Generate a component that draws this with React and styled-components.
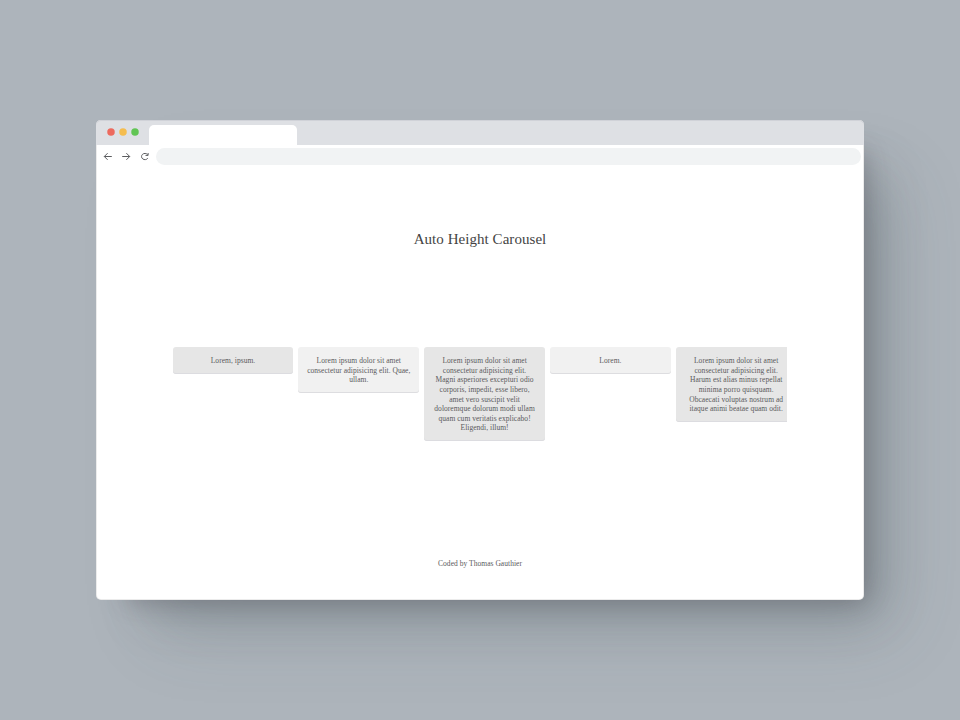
import React from "react";
import styled, { createGlobalStyle } from "styled-components";

const GlobalStyle = createGlobalStyle`
  * { box-sizing: border-box; }
  body { margin: 0; background: #adb4bb; }
`;

const Desktop = styled.main`
  height: 720px;
  overflow: hidden;
  display: grid;
  place-items: center;
  background: #adb4bb;
`;

const BrowserWindow = styled.section`
  width: 768px;
  height: 480px;
  display: flex;
  flex-direction: column;
  border-radius: 5px;
  background: #fff;
  box-shadow:
    inset 0 0 0 1px rgba(0, 0, 0, 0.08),
    16px 16px 22px -14px rgba(65, 58, 70, 0.28),
    32px 32px 44px -18px rgba(65, 75, 80, 0.25),
    46px 46px 70px -16px rgba(80, 92, 98, 0.18);
`;

const TabBar = styled.header`
  height: 25px;
  flex: none;
  display: flex;
  align-items: flex-end;
  border-radius: 5px 5px 0 0;
  background: #dee0e4;
  box-shadow: inset 0 1px 0 #d0d2d8;
`;

const Lights = styled.div`
  width: 53px;
  height: 25px;
  padding: 0 0 1px 10.5px;
  display: flex;
  align-items: center;
  gap: 4px;
`;

const Light = styled.svg`
  width: 8px;
  height: 8px;
  fill: ${({ $color }) => $color};
`;

const Tab = styled.div`
  width: 148px;
  height: 20px;
  border-radius: 5px 5px 0 0;
  background: #fff;
`;

const Toolbar = styled.nav`
  height: 22px;
  flex: none;
  display: flex;
  align-items: center;
  padding: 1px 3px 0 7px;
`;

const ToolIcon = styled.svg`
  width: 10px;
  height: 10px;
  margin: 0 8.3px 0 0;
  flex: none;
  fill: none;
  stroke: #5b5c5f;
  stroke-width: 1;
`;

const Address = styled.div`
  height: 17px;
  flex: 1;
  margin-left: -2px;
  border-radius: 9px;
  background: #f1f3f4;
`;

const Page = styled.article`
  flex: 1;
  display: flex;
  flex-direction: column;
  align-items: center;
  font-family: "Liberation Serif", serif;
  color: #5a5a5c;
`;

const Title = styled.h1`
  margin: 63px 0 0;
  height: 18px;
  font-size: 15px;
  line-height: 18px;
  font-weight: 400;
  letter-spacing: 0.05px;
  color: #444;
  white-space: nowrap;
`;

const Carousel = styled.div`
  width: 614.8px;
  height: 94px;
  margin: 99px 0 0;
  display: flex;
  align-items: flex-start;
  gap: 5px;
  overflow: hidden;
`;

const Card = styled.div`
  width: 120.8px;
  flex: none;
  padding: 9.2px 0 8px;
  border-radius: 3px;
  text-align: center;
  background: ${({ $dark }) => ($dark ? "#e6e6e6" : "#f1f1f1")};
  box-shadow: inset 0 -1px 0 ${({ $dark }) => ($dark ? "#dcdce0" : "#dddde0")};
`;

const Line = styled.div`
  height: 9.6px;
  font-size: 7.5px;
  line-height: 9.6px;
  letter-spacing: 0.04px;
  white-space: nowrap;
`;

const Credit = styled.footer`
  margin-top: 117.5px;
  font-size: 7.5px;
  line-height: 10px;
  letter-spacing: 0.04px;
`;

const lightColors = ["#ed6a5e", "#f5bd4f", "#61c554"];

const cards = [
  ["Lorem, ipsum."],
  ["Lorem ipsum dolor sit amet", "consectetur adipisicing elit. Quae,", "ullam."],
  [
    "Lorem ipsum dolor sit amet",
    "consectetur adipisicing elit.",
    "Magni asperiores excepturi odio",
    "corporis, impedit, esse libero,",
    "amet vero suscipit velit",
    "doloremque dolorum modi ullam",
    "quam cum veritatis explicabo!",
    "Eligendi, illum!",
  ],
  ["Lorem."],
  [
    "Lorem ipsum dolor sit amet",
    "consectetur adipisicing elit.",
    "Harum est alias minus repellat",
    "minima porro quisquam.",
    "Obcaecati voluptas nostrum ad",
    "itaque animi beatae quam odit.",
  ],
];

export default function App() {
  return (
    <>
      <GlobalStyle />
      <Desktop>
        <BrowserWindow>
          <TabBar>
            <Lights>
              {lightColors.map((color) => (
                <Light key={color} $color={color} viewBox="0 0 8 8">
                  <circle cx="4" cy="4" r="3.75" />
                </Light>
              ))}
            </Lights>
            <Tab />
          </TabBar>
          <Toolbar>
            <ToolIcon viewBox="0 0 10 10">
              <path d="M8.8 4.5H1.3M4.6 1.2L1.3 4.5l3.3 3.3" />
            </ToolIcon>
            <ToolIcon viewBox="0 0 10 10">
              <path d="M1.2 4.5h7.5M5.4 1.2L8.7 4.5 5.4 7.8" />
            </ToolIcon>
            <ToolIcon viewBox="0 0 10 10">
              <path d="M7.8 6.2A3.4 3.1 0 1 1 7.6 2.6M8.1 1v2.4H5.5" />
            </ToolIcon>
            <Address />
          </Toolbar>
          <Page>
            <Title>Auto Height Carousel</Title>
            <Carousel>
              {cards.map((lines, i) => (
                <Card key={i} $dark={i % 2 === 0}>
                  {lines.map((line) => (
                    <Line key={line}>{line}</Line>
                  ))}
                </Card>
              ))}
            </Carousel>
            <Credit>Coded by Thomas Gauthier</Credit>
          </Page>
        </BrowserWindow>
      </Desktop>
    </>
  );
}
